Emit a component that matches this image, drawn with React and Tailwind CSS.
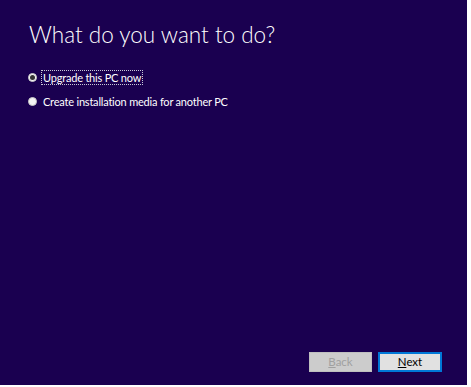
import React, { useState } from "react";

function Radio({ checked, label, focused, onClick }) {
  return (
    <div className="flex items-center h-[15px] cursor-default" onClick={onClick}>
      <span className="w-[9px] h-[9px] rounded-full bg-[#f4f4f4] border border-[#c8c8c8] flex items-center justify-center">
        {checked && <span className="w-[5px] h-[5px] rounded-full bg-[#333333]" />}
      </span>
      <span
        className={
          "ml-[4px] px-[1px] leading-[13px] border border-dotted " +
          (focused ? "border-[#c8c8d8]" : "border-transparent")
        }
      >
        {label}
      </span>
    </div>
  );
}

export default function App() {
  const [choice, setChoice] = useState("upgrade");

  return (
    <div className="w-[471px] h-[387px] bg-white flex">
      <div
        className="w-[467px] h-[385px] bg-[#1a0050] text-white flex flex-col"
        style={{ fontFamily: 'Lato, "Open Sans", sans-serif' }}
      >
        {/* Heading */}
        <h1 className="ml-[29px] mt-[20px] text-[22.5px] font-light leading-[30px]">
          What do you want to do?
        </h1>

        {/* Options */}
        <div className="ml-[28px] mt-[20px] flex flex-col gap-[9px] text-[11px] tracking-[-0.2px]">
          <Radio
            checked={choice === "upgrade"}
            focused
            label="Upgrade this PC now"
            onClick={() => setChoice("upgrade")}
          />
          <Radio
            checked={choice === "media"}
            label="Create installation media for another PC"
            onClick={() => setChoice("media")}
          />
        </div>

        {/* Buttons */}
        <div className="mt-auto mb-[13px] mr-[25px] flex justify-end gap-[6px] text-[11.5px]">
          <button
            disabled
            className="w-[63px] h-[20px] bg-[#cccccc] border border-[#bfbfbf] text-[#a0a0a0] leading-none"
          >
            <span className="underline underline-offset-1">B</span>ack
          </button>
          <button className="w-[64px] h-[20px] bg-[#e1e1e1] border-2 border-[#0078d7] text-black leading-none">
            <span className="underline underline-offset-1">N</span>ext
          </button>
        </div>
      </div>
    </div>
  );
}
